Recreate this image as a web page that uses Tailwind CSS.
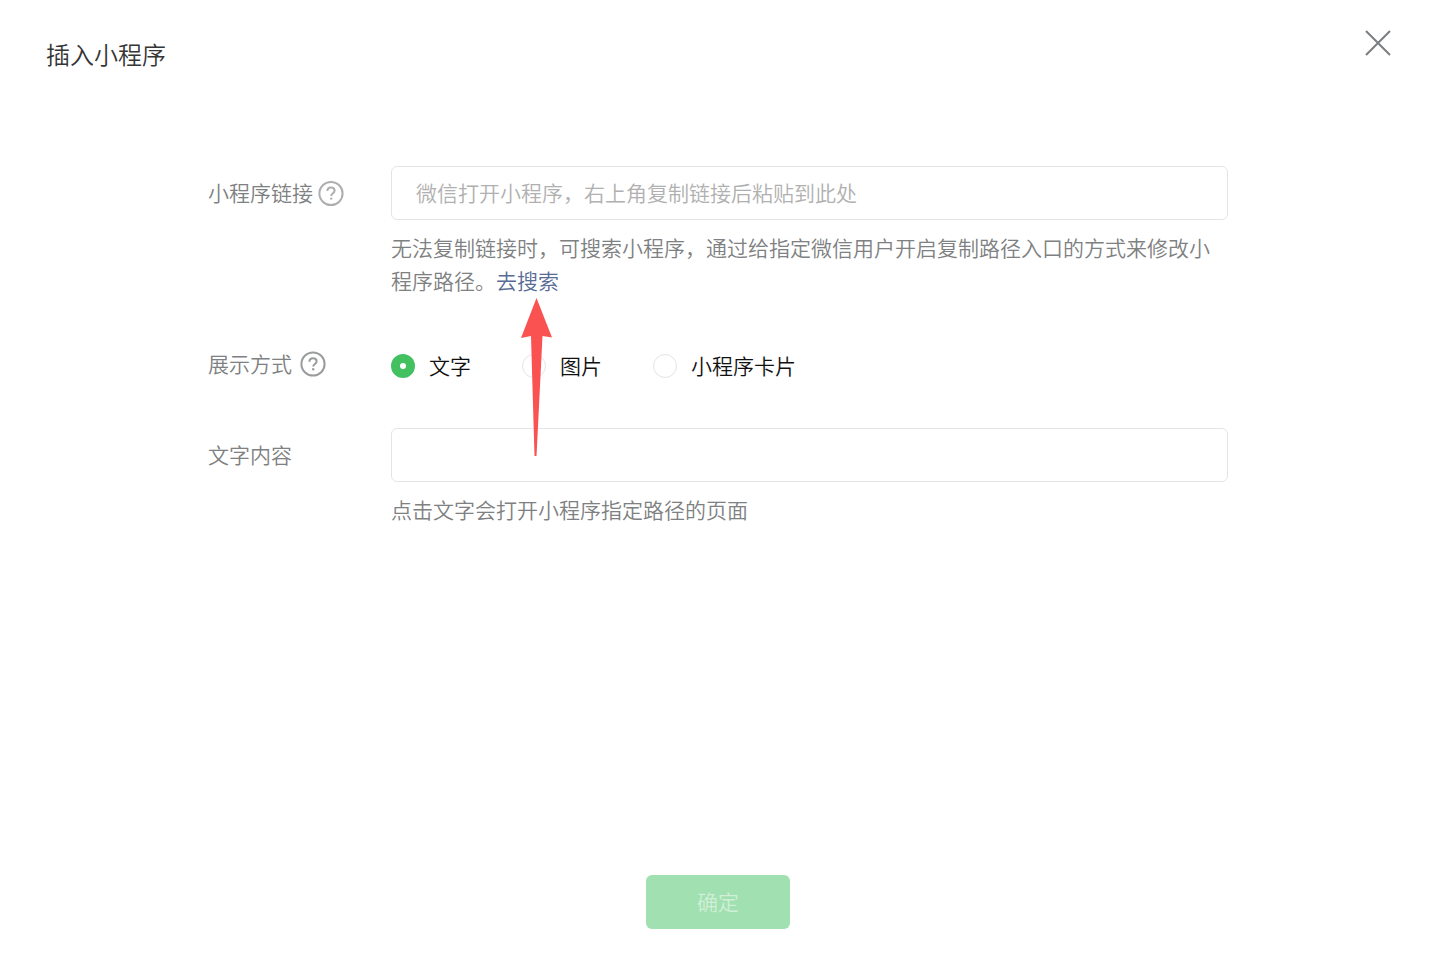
<!DOCTYPE html>
<html lang="zh-CN">
<head>
<meta charset="utf-8">
<meta name="viewport" content="width=device-width, initial-scale=1">
<title>插入小程序</title>
<script src="https://cdn.jsdelivr.net/npm/@tailwindcss/browser@4"></script>
</head>
<body class="bg-white font-['Noto_Sans_CJK_SC',sans-serif] text-[21px] leading-8 font-[350] text-[#7e8081]">
<div role="dialog" aria-labelledby="title" class="flex min-h-screen flex-col">
  <header class="flex items-start justify-between pt-7 pr-10 pl-[46px]">
    <h1 id="title" class="pt-2 text-2xl leading-9 font-[350] text-[#353535]">插入小程序</h1>
    <button type="button" aria-label="关闭" class="p-0.5">
      <svg class="size-7" viewBox="0 0 28 28" fill="none" stroke="#7b7e80" stroke-width="2" aria-hidden="true"><path d="M2 1l24 24M26 1L2 25"/></svg>
    </button>
  </header>

  <form class="flex grow flex-col pt-[94px] pr-[206px] pl-52">
    <div class="flex">
      <div class="flex h-[54px] w-[183px] shrink-0 items-center gap-1">
        <label for="link" class="pb-0.5">小程序链接</label>
        <button type="button" aria-label="小程序链接说明">
          <svg class="size-7" viewBox="0 0 28 28" fill="none" stroke="#adaeaf" stroke-width="2" aria-hidden="true"><circle cx="14" cy="14.500" r="11.6"/><path d="M10.400 12c0-2.100 1.500-3.500 3.600-3.500s3.600 1.300 3.600 3.200c0 2.500-3.400 2.600-3.400 5.200"/><circle cx="14.200" cy="19.600" r="1.200" fill="#adaeaf" stroke="none"/></svg>
        </button>
      </div>
      <div class="min-w-0 grow">
        <input id="link" type="text" placeholder="微信打开小程序，右上角复制链接后粘贴到此处" class="block h-[54px] w-full rounded-md border border-[#e4e4e4] px-6 pb-0.5 text-[#353535] outline-none placeholder:text-[#b0b0b0]">
        <p class="pt-[11px] leading-[33px]">无法复制链接时，可搜索小程序，通过给指定微信用户开启复制路径入口的方式来修改小程序路径。<span class="relative inline-block"><a href="#search" class="text-[#576b95]">去搜索</a><svg class="pointer-events-none absolute top-full left-[25px] mt-px h-[159px] w-8" viewBox="0 0 32 159" fill="#fa5151" aria-hidden="true"><path d="M15.500 0L31 39.500L21.500 38L15.500 158H13.500L10 38L0 40z"/></svg></span></p>
      </div>
    </div>

    <div role="radiogroup" aria-labelledby="mode-label" class="flex items-center pt-12">
      <div class="flex w-[183px] shrink-0 items-center gap-[7px]">
        <span id="mode-label" class="pb-0.5">展示方式</span>
        <button type="button" aria-label="展示方式说明">
          <svg class="size-7" viewBox="0 0 28 28" fill="none" stroke="#9a9b9c" stroke-width="2" aria-hidden="true"><circle cx="14" cy="14" r="11.6"/><path d="M10.4 11.700c0-2.100 1.500-3.500 3.600-3.500s3.600 1.300 3.600 3.200c0 2.500-3.400 2.600-3.400 5.200"/><circle cx="14.200" cy="19.300" r="1.200" fill="#9a9b9c" stroke="none"/></svg>
        </button>
      </div>
      <div class="flex gap-[51px] pt-1 text-[#111111]">
        <label class="flex items-center gap-[14px]"><input type="radio" name="mode" checked class="size-6 appearance-none rounded-full border border-[#e4e4e4] checked:border-[9px] checked:border-[#43c060]"><span class="pb-0.5">文字</span></label>
        <label class="flex items-center gap-[14px]"><input type="radio" name="mode" class="size-6 appearance-none rounded-full border border-[#e4e4e4] checked:border-[9px] checked:border-[#43c060]"><span class="pb-0.5">图片</span></label>
        <label class="flex items-center gap-[14px]"><input type="radio" name="mode" class="size-6 appearance-none rounded-full border border-[#e4e4e4] checked:border-[9px] checked:border-[#43c060]"><span class="pb-0.5">小程序卡片</span></label>
      </div>
    </div>

    <div class="flex pt-[45px]">
      <label for="content" class="flex h-[54px] w-[183px] shrink-0 items-center pb-0.5">文字内容</label>
      <div class="min-w-0 grow">
        <input id="content" type="text" class="block h-[54px] w-full rounded-md border border-[#e4e4e4] px-6 pb-0.5 text-[#353535] outline-none">
        <p class="pt-[11px] leading-[33px]">点击文字会打开小程序指定路径的页面</p>
      </div>
    </div>
  </form>

  <footer class="flex justify-center pb-[37px] pl-0.5">
    <button type="submit" disabled class="h-[54px] w-36 rounded-md bg-[#a1e0b0] pb-0.5 text-[#d0efd7]">确定</button>
  </footer>
</div>
</body>
</html>
